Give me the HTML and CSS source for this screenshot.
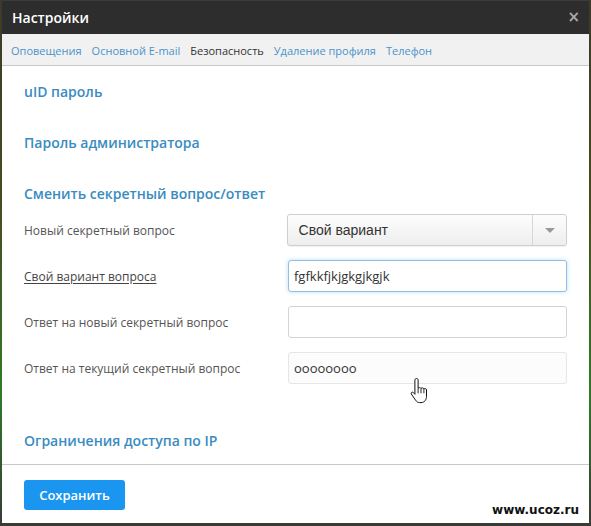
FILE: index.html
```html
<!DOCTYPE html>
<html lang="ru">
<head>
  <meta charset="UTF-8"/>
  <title>Настройки</title>
  <link rel="stylesheet" href="styles.css">
</head>
<body>
  <div class="dialog">
    <div class="dialog-head">
      <span class="dialog-title">Настройки</span>
      <span class="dialog-close">×</span>
    </div>
    <div class="tabs">
      <a class="tab">Оповещения</a>
      <a class="tab">Основной E-mail</a>
      <a class="tab active">Безопасность</a>
      <a class="tab">Удаление профиля</a>
      <a class="tab">Телефон</a>
    </div>
    <div class="dialog-body">
      <h3 class="section">uID пароль</h3>
      <h3 class="section">Пароль администратора</h3>
      <h3 class="section open">Сменить секретный вопрос/ответ</h3>
      <div class="form">
        <div class="row">
          <label>Новый секретный вопрос</label>
          <div class="select">
            <span class="select-value">Свой вариант</span>
            <span class="select-arrow"></span>
          </div>
        </div>
        <div class="row">
          <label class="dotted">Свой вариант вопроса</label>
          <input class="field focus" value="fgfkkfjkjgkgjkgjk">
        </div>
        <div class="row">
          <label>Ответ на новый секретный вопрос</label>
          <input class="field" value="">
        </div>
        <div class="row">
          <label>Ответ на текущий секретный вопрос</label>
          <input class="field soft" value="oooooooo">
        </div>
      </div>
      <h3 class="section last">Ограничения доступа по IP</h3>
    </div>
    <div class="dialog-foot">
      <button class="btn-save">Сохранить</button>
    </div>
    <!-- mouse pointer over the last field -->
    <svg class="pointer" width="20" height="28" viewBox="0 0 20 28">
      <path d="M6.5 1.5c1 0 1.6.7 1.6 1.6v8.2c.3-.9 2.6-.9 2.9.2.5-.9 2.6-.8 2.9.4.5-.7 2.6-.5 2.6 1v6.4c0 3.4-2 6.3-5.5 6.3H9.6c-1.8 0-3-1-4-2.4L1.3 17c-.7-1.1.9-2.6 2-1.5l1.6 1.8V3.1c0-.9.6-1.6 1.6-1.600z" fill="#fff" stroke="#111" stroke-width="1"/>
      <path d="M8.1 11.3v5M11 11.5v4.8M13.9 12v4.3" stroke="#111" stroke-width="0.9" fill="none"/>
    </svg>
    <span class="mark">www.ucoz.ru</span>
  </div>
</body>
</html>
```

FILE: styles.css
```css
* { box-sizing: border-box; }
html, body { margin:0; padding:0; }
body {
  width:591px; height:526px; overflow:hidden;
  background: linear-gradient(180deg, #3b3a2c 0%, #4a4d1e 40%, #2f7a2a 75%, #3a3a36 100%);
  font-family:'Open Sans', 'Noto Sans', sans-serif;
}
.dialog {
  position:relative;
  width:587px; height:523px;
  margin-left:2px;
  background:#fff;
  display:flex; flex-direction:column;
}
.dialog-head {
  height:34px;
  background:#2d2d2d;
  border-top:1px solid #3c3c3c;
  display:flex; align-items:center; justify-content:space-between;
  padding:0 9px 0 10px;
}
.dialog-title { color:#fff; font-size:14px; font-weight:600; }
.dialog-close { color:#a8a8a8; font-size:15px; font-weight:700; line-height:1; font-family:'DejaVu Sans', sans-serif; }
.tabs {
  height:32px;
  background:#f1f1f1;
  border-bottom:1px solid #c9c9c9;
  display:flex; align-items:center; gap:10px;
  padding:1px 0 0 9px;
}
.tab { font-size:11px; color:#4b93c9; cursor:pointer; }
.tab.active { color:#333; }
.dialog-body { padding:16px 22px 13px; }
.section {
  margin:0 0 31px;
  font-size:14px; line-height:20px; font-weight:600;
  color:#3a8cc0;
}
.section.open { margin-bottom:10px; }
.section.last { margin:47px 0 0; }
.form { display:flex; flex-direction:column; gap:14px; }
.row { display:flex; align-items:center; height:32px; }
.row label { width:264px; font-size:12px; color:#555; }
.row label.dotted { text-decoration:underline; text-underline-offset:2px; color:#444; }
.select {
  width:282px; height:32px;
  border:1px solid #cfcfcf; border-radius:3px;
  background:linear-gradient(#fdfdfd, #eeeeee);
  display:flex; align-items:center;
  box-shadow:0 1px 1px rgba(0,0,0,0.06);
}
.select-value {
  flex:1; padding-left:11px;
  font-family:'Liberation Sans', Arial, sans-serif; font-size:14px; color:#333;
}
.select-arrow {
  width:34px; height:30px;
  border-left:1px solid #d6d6d6;
  position:relative;
}
.select-arrow::after {
  content:''; position:absolute; left:12px; top:13px;
  border-left:5px solid transparent; border-right:5px solid transparent;
  border-top:5px solid #999;
}
.field {
  width:279px; height:32px;
  border:1px solid #d3d3d3; border-radius:3px;
  padding:0 5px;
  font-family:'Open Sans', sans-serif; font-size:13px; color:#333;
  background:#fff; outline:none;
}
.field.focus {
  border-color:#8ec0e8;
  box-shadow:0 0 4px rgba(102,175,233,0.45);
}
.field.soft { border-color:#e6e6e6; background:#fcfcfc; }
.dialog-foot {
  border-top:1px solid #c9c9c9;
  padding:15px 22px 0;
  flex:1;
}
.btn-save {
  width:101px; height:30px;
  border:none; border-radius:3px;
  background:#1b96f0; color:#fff;
  font-family:'Open Sans', sans-serif; font-size:13px; font-weight:600;
}
.pointer { position:absolute; left:408px; top:377px; }
.mark {
  position:absolute; right:10px; bottom:6px;
  font-family:'DejaVu Sans', Verdana, sans-serif; font-size:12px; font-weight:700;
  color:#111;
  text-shadow:1px 0 0 #fff, -1px 0 0 #fff, 0 1px 0 #fff, 0 -1px 0 #fff;
}
```
